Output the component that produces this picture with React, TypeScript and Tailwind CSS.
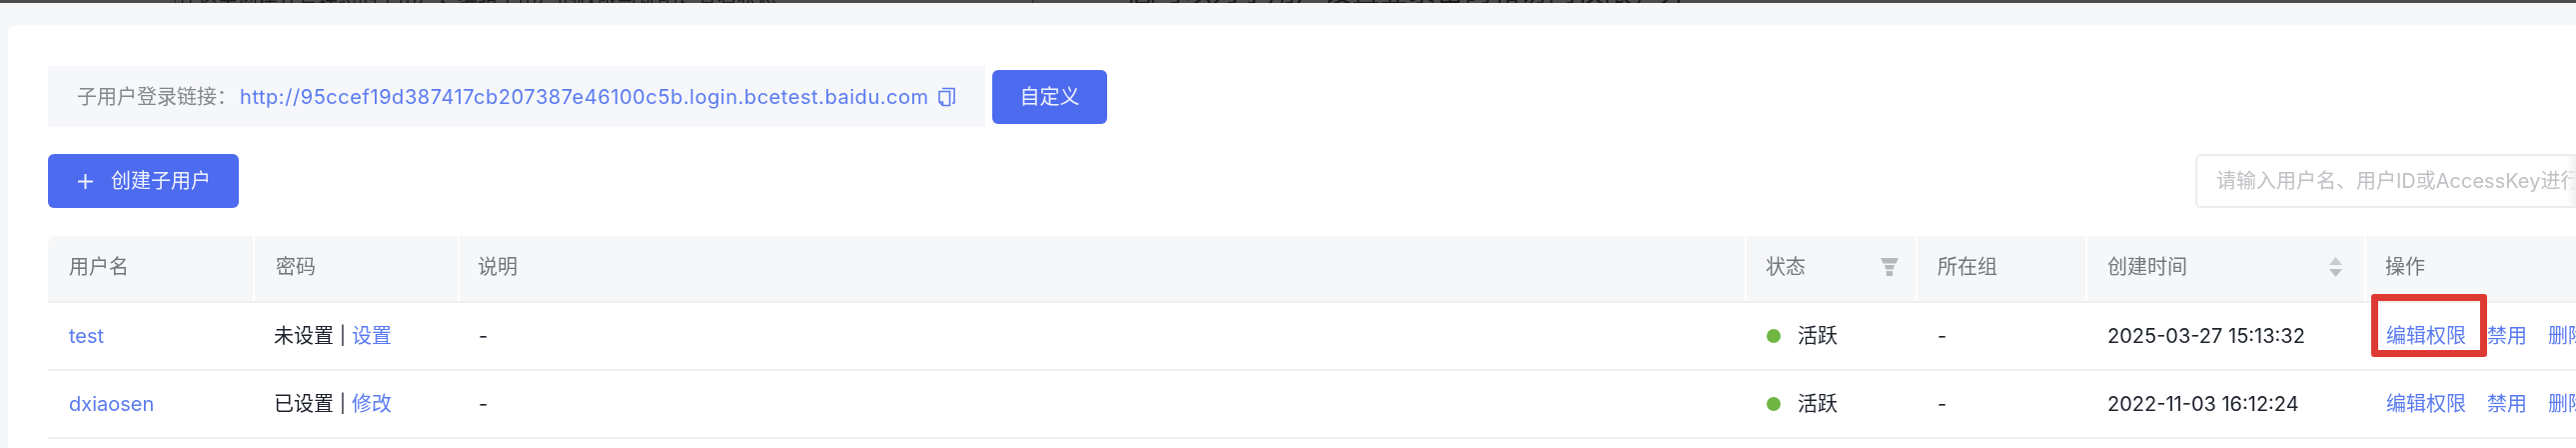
const rowCols = "grid grid-cols-[205px_205px_1288px_171px_170px_279px_212px]"
const link = "text-[#5a7bf0]"

const users = [
    { name: "test", pwd: "未设置", pwdAction: "设置", created: "2025-03-27 15:13:32", marked: true },
    { name: "dxiaosen", pwd: "已设置", pwdAction: "修改", created: "2022-11-03 16:12:24", marked: false },
]

function CopyIcon() {
    return (
        <svg width="17" height="20" viewBox="0 0 17 20" fill="none" stroke="#5a7bf0" strokeWidth="1.6" className="ml-[9px] shrink-0">
            <path d="M1 4.5h10.5v14H4.5L1 15z" />
            <path d="M4.5 18.5V15H1" />
            <path d="M4 1.5h12v14.5h-2" />
        </svg>
    )
}

function FilterIcon() {
    return (
        <svg width="18" height="18" viewBox="0 0 18 18" fill="#b6b8bd">
            <path d="M0 0h18l-2.6 5.5H2.6z" />
            <path d="M4 7h10l-1.4 4.5H5.4z" />
            <path d="M5.8 13h6.4v5H5.8z" />
        </svg>
    )
}

function SortIcon() {
    return (
        <svg width="13" height="20" viewBox="0 0 13 20" fill="#bcbec3">
            <path d="M6.5 0L13 8H0z" fill="#c9cbcf" />
            <path d="M0 12h13l-6.5 8z" />
        </svg>
    )
}

export default function App() {
    return (
        <div className="w-[2578px] h-[448px] overflow-hidden bg-[#f6f7f9] blur-[0.5px] text-[20px] leading-[28px] text-[#1c212b]" style={{ fontFamily: '"Inter", "Noto Sans CJK SC", sans-serif' }}>
            {/* cut-off screenshot edge */}
            <div className="flex items-end h-[3px] overflow-hidden bg-[#4b4b4b] text-[#1a1a1a] leading-none whitespace-nowrap">
                <div className="w-[175px] shrink-0" />
                <div className="w-[858px] shrink-0 border-l h-[3px] border-[#2b2b2b] flex items-end pl-[2px]">
                    <div className="-mb-[5px] text-[20px] overflow-hidden">在这里创建并管理您的子用户，编辑子用户的权限与说明，查看状态</div>
                </div>
                <div className="w-[96px] shrink-0 border-l h-[3px] border-[#2b2b2b]" />
                <div className="w-[560px] shrink-0 -mb-[3px] text-[28px] overflow-hidden">您可以为子用户设置登录密码和访问权限，并对其进行管理</div>
            </div>

            <div className="ml-[8px] mt-[22px] h-[423px] rounded-tl-[8px] bg-white pl-[40px] pt-[41px]">
                <div className="flex items-center">
                    <div className="flex items-center w-[938px] h-[61px] bg-[#f6f7fb] pl-[29px]">
                        <span className="text-[#85888e] whitespace-nowrap">子用户登录链接：</span>
                        <span className={link + " ml-[3px] tracking-[0.55px] whitespace-nowrap"}>http://95ccef19d387417cb207387e46100c5b.login.bcetest.baidu.com</span>
                        <CopyIcon />
                    </div>
                    <button className="ml-[7px] w-[115px] h-[54px] rounded-[6px] bg-[#4d6bee] text-[#eef1fe]">自定义</button>
                </div>

                <div className="flex justify-between mt-[27px]">
                    <button className="flex items-center w-[191px] h-[54px] rounded-[6px] bg-[#4d6bee] text-[#eef1fe] pl-[30px]">
                        <svg width="15" height="15" viewBox="0 0 15 15" stroke="#eef1fe" strokeWidth="2"><path d="M7.5 0v15M0 7.5h15" /></svg>
                        <span className="ml-[18px]">创建子用户</span>
                    </button>
                    <div className="relative flex items-center w-[381px] h-[54px] overflow-hidden rounded-l-[6px] border-2 border-r-0 border-[#ebecee] pl-[19px] text-[#bfc1c5] whitespace-nowrap">
                        请输入用户名、用户ID或AccessKey进行搜索
                        <div className="absolute right-0 inset-y-0 w-[10px] bg-gradient-to-l from-[#f1f1f2] to-transparent" />
                    </div>
                </div>

                <div className="mt-[28px] w-[2530px]">
                    <div className={rowCols + " h-[67px] rounded-tl-[8px] bg-[#f6f7f9] border-b-2 border-[#eeeff1] text-[#72767d]"}>
                        <div className="flex items-center pl-[21px] pb-[3px]">用户名</div>
                        <div className="flex items-center pl-[21px] pb-[3px] border-l-2 border-white">密码</div>
                        <div className="flex items-center pl-[18px] pb-[3px] border-l-2 border-white">说明</div>
                        <div className="flex items-center justify-between pl-[19px] pr-[17px] pb-[3px] border-l-2 border-white">状态<FilterIcon /></div>
                        <div className="flex items-center pl-[20px] pb-[3px] border-l-2 border-white">所在组</div>
                        <div className="flex items-center justify-between pl-[20px] pr-[22px] pb-[3px] border-l-2 border-white">创建时间<SortIcon /></div>
                        <div className="flex items-center pl-[19px] pb-[3px] border-l-2 border-white">操作</div>
                    </div>
                    {users.map((u) => (
                        <div key={u.name} className={rowCols + " h-[68px] border-b-2 border-[#eeeff1]"}>
                            <div className={"flex items-center pl-[21px] " + link}>{u.name}</div>
                            <div className="flex items-center pl-[21px] whitespace-nowrap">
                                {u.pwd}<span className="ml-[6px] mr-[6px] text-[18px]">|</span><span className={link}>{u.pwdAction}</span>
                            </div>
                            <div className="flex items-center pl-[21px]">-</div>
                            <div className="flex items-center pl-[22px]">
                                <span className="w-[14px] h-[14px] rounded-full bg-[#6fb644]" />
                                <span className="ml-[17px]">活跃</span>
                            </div>
                            <div className="flex items-center pl-[22px]">-</div>
                            <div className="flex items-center pl-[22px] whitespace-nowrap">{u.created}</div>
                            <div className={"relative flex items-center pl-[22px] whitespace-nowrap overflow-visible " + link}>
                                <span>编辑权限</span>
                                <span className="ml-[21px]">禁用</span>
                                <span className="ml-[21px]">删除</span>
                                {u.marked && <div className="absolute left-[7px] -top-[9px] w-[116px] h-[63px] rounded-[3px] border-[7px] border-[#dd3a33]" />}
                            </div>
                        </div>
                    ))}
                </div>
            </div>
        </div>
    )
}
